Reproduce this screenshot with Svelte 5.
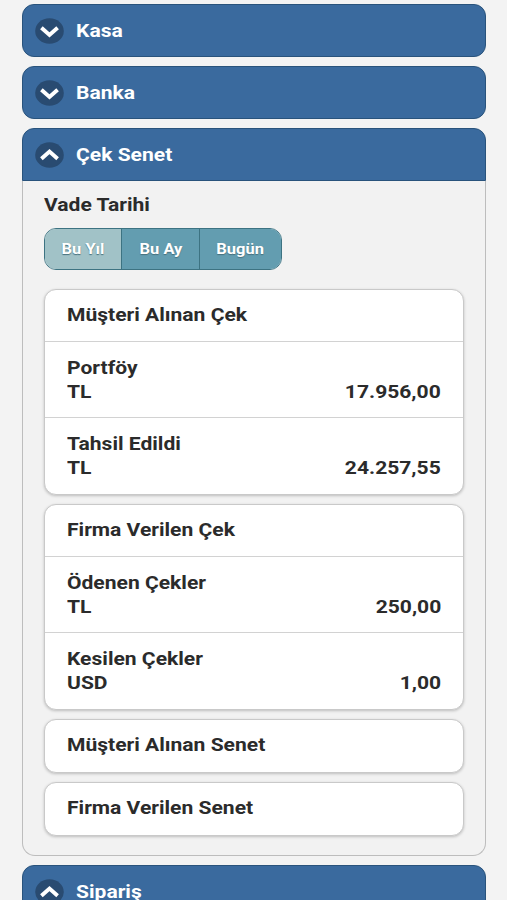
<script>
	const periods = ['Bu Yıl', 'Bu Ay', 'Bugün'];
	let period = $state('Bu Yıl');

	const groups = [
		{
			title: 'Müşteri Alınan Çek',
			rows: [
				{ name: 'Portföy', currency: 'TL', amount: '17.956,00' },
				{ name: 'Tahsil Edildi', currency: 'TL', amount: '24.257,55' }
			]
		},
		{
			title: 'Firma Verilen Çek',
			rows: [
				{ name: 'Ödenen Çekler', currency: 'TL', amount: '250,00' },
				{ name: 'Kesilen Çekler', currency: 'USD', amount: '1,00' }
			]
		},
		{ title: 'Müşteri Alınan Senet', rows: [] },
		{ title: 'Firma Verilen Senet', rows: [] }
	];
</script>

{#snippet heading(title, up, open)}
	<button class="heading" class:open>
		<svg class="icon" viewBox="0 0 30 26" width="30" height="26">
			<ellipse cx="15.5" cy="13" rx="14.3" ry="12.8" fill="#294b71" />
			<path
				d={up ? 'M7.4 16.8 L15.5 9.6 L23.6 16.8' : 'M7.4 9.8 L15.5 17 L23.6 9.8'}
				fill="none"
				stroke="#fff"
				stroke-width="3.9"
			/>
		</svg>
		<span class="wide">{title}</span>
	</button>
{/snippet}

<main>
	{@render heading('Kasa', false, false)}
	{@render heading('Banka', false, false)}

	<section>
		{@render heading('Çek Senet', true, true)}
		<div class="panel">
			<div class="legend"><span class="wide">Vade Tarihi</span></div>
			<div class="periods">
				{#each periods as p}
					<button class:active={period === p} onclick={() => (period = p)}>
						<span>{p}</span>
					</button>
				{/each}
			</div>

			{#each groups as group}
				<ul>
					<li class="title"><span class="wide">{group.title}</span></li>
					{#each group.rows as row}
						<li class="row">
							<div><span class="wide">{row.name}</span></div>
							<div class="line">
								<span class="wide">{row.currency}</span>
								<span class="wide amount">{row.amount}</span>
							</div>
						</li>
					{/each}
				</ul>
			{/each}
		</div>
	</section>

	{@render heading('Sipariş', true, true)}
</main>

<style>
	:global(body) {
		background: #f3f3f3;
		overflow: hidden;
	}

	main {
		box-sizing: border-box;
		height: 900px;
		padding: 4px 21px 0 22px;
		overflow: hidden;
		display: flex;
		flex-direction: column;
		gap: 9px;
		font-family: Roboto, 'Liberation Sans', sans-serif;
		font-size: 18.4px;
		font-weight: 700;
		line-height: 24px;
		color: #2b2b2b;
	}

	button {
		font: inherit;
		margin: 0;
	}

	.wide {
		display: inline-block;
		white-space: nowrap;
		transform: scaleX(1.145);
		transform-origin: left center;
	}

	.heading {
		box-sizing: border-box;
		flex: none;
		width: 100%;
		height: 53px;
		display: flex;
		align-items: center;
		gap: 12px;
		padding: 0 12px 0 11px;
		border: 1px solid #29537c;
		border-radius: 12px;
		background: #3a6a9e;
		color: #fff;
		text-align: left;
	}

	.heading.open {
		border-radius: 12px 12px 0 0;
	}

	section {
		flex: none;
	}

	.panel {
		box-sizing: border-box;
		height: 675px;
		padding: 12px 21px 0;
		border: 1px solid #bdbdbd;
		border-top: 0;
		border-radius: 0 0 13px 13px;
		background: #f2f2f2;
	}

	.legend {
		height: 35px;
	}

	.periods {
		box-sizing: border-box;
		display: flex;
		width: 238px;
		height: 42px;
		margin-bottom: 19px;
		border: 1px solid #3d7382;
		border-radius: 12px;
		overflow: hidden;
	}

	.periods button {
		width: 76px;
		padding: 0 0 1px;
		border: 0;
		background: #639db0;
		color: #fff;
		font-size: 14.6px;
		text-shadow: 0 1px 1px #456f7c;
	}

	.periods button + button {
		width: 78px;
		border-left: 1px solid #3d7382;
	}

	.periods button:last-child {
		width: 82px;
	}

	.periods button.active {
		background: #a1c2c7;
	}

	.periods span {
		display: inline-block;
		transform: scaleX(1.13);
	}

	ul {
		margin: 0 0 9px;
		padding: 0;
		list-style: none;
		border: 1px solid #c9c9c9;
		border-radius: 12px;
		background: #fff;
		box-shadow: 0 1px 3px rgba(0, 0, 0, 0.22);
	}

	.title {
		height: 38px;
		padding: 13px 22px 1px;
	}

	.title:not(:last-child) {
		height: 37px;
	}

	.row {
		height: 61px;
		padding: 14px 22px 0;
		border-top: 1px solid #d2d2d2;
	}

	.row:last-child {
		height: 62px;
	}

	.line {
		display: flex;
		justify-content: space-between;
	}

	.amount {
		transform-origin: right center;
	}
</style>
